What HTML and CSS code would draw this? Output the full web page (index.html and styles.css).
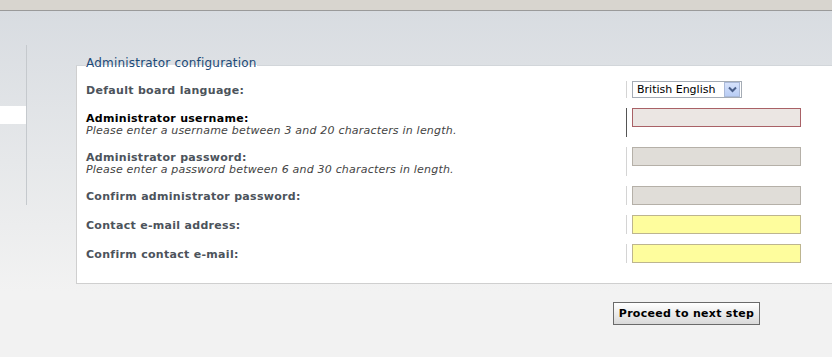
FILE: index.html
```html
<!DOCTYPE html>
<html lang="en">
<head>
    <meta charset="UTF-8">
    <title>Administrator configuration</title>
    <link rel="stylesheet" href="styles.css">
</head>
<body>
    <div class="topbar"></div>
    <div class="page">
        <div class="sidebar">
            <div class="menu-item"></div>
        </div>
        <div class="main">
            <fieldset class="config">
                <legend>Administrator configuration</legend>
                <dl>
                    <dt class="short">Default board language:</dt>
                    <dd class="short">
                        <span class="select">
                            <span class="select-text">British English</span>
                            <span class="select-arrow">
                                <svg width="9" height="7" viewBox="0 0 9 7"><path d="M1 1.5 L4.5 5 L8 1.5" fill="none" stroke="#4a5f8a" stroke-width="2"/></svg>
                            </span>
                        </span>
                    </dd>

                    <dt class="active"><label>Administrator username:</label>
                        <span class="explain">Please enter a username between 3 and 20 characters in length.</span></dt>
                    <dd class="active"><input type="text" class="inputbox error"></dd>

                    <dt><label>Administrator password:</label>
                        <span class="explain">Please enter a password between 6 and 30 characters in length.</span></dt>
                    <dd><input type="password" class="inputbox"></dd>

                    <dt><label>Confirm administrator password:</label></dt>
                    <dd><input type="password" class="inputbox"></dd>

                    <dt><label>Contact e-mail address:</label></dt>
                    <dd><input type="text" class="inputbox highlight"></dd>

                    <dt><label>Confirm contact e-mail:</label></dt>
                    <dd><input type="text" class="inputbox highlight"></dd>
                </dl>
            </fieldset>
            <div class="actions">
                <button class="button">Proceed to next step</button>
            </div>
        </div>
    </div>
</body>
</html>
```

FILE: styles.css
```css
body {
    margin: 0;
    font-family: 'DejaVu Sans', Verdana, sans-serif;
    overflow: hidden;
    background: #f2f2f2;
}
.topbar {
    height: 10px;
    background-color: #d8d5cf;
    border-bottom: 1px solid #9a9a9a;
}
.page {
    display: flex;
    min-height: 346px;
    background: linear-gradient(#d8dce1 0, #e6e8ea 150px, #f2f2f2 280px);
}
.sidebar {
    width: 26px;
    height: 99px;
    margin-top: 34px;
    padding-top: 61px;
    border-right: 1px solid #c5c9cd;
}
.menu-item {
    height: 18px;
    background: #fff;
}
.main {
    flex: 1;
    padding: 45px 0 0 49px;
}
.config {
    margin: 0 -20px 0 0;
    padding: 7px 9px 20px 9px;
    background: #fff;
    border: 1px solid #cfcfcf;
    border-top-color: #d2d6da;
}
.config legend {
    padding: 0 0 4px 0;
    font-size: 12px;
    line-height: 14px;
    letter-spacing: 0.2px;
    color: #1c4a78;
}
dl {
    display: grid;
    grid-template-columns: 540px 1fr;
    row-gap: 10px;
    margin: 0;
}
dt {
    padding-top: 4px;
    font-size: 11px;
    letter-spacing: 0.3px;
    color: #4c535b;
}
dt label {
    display: block;
    font-weight: bold;
    line-height: 13px;
}
dt.short {
    padding-top: 3px;
    font-weight: bold;
    line-height: 13px;
}
dt.active {
    color: #000;
}
.explain {
    display: block;
    font-size: 11px;
    line-height: 12px;
    letter-spacing: 0.2px;
    font-style: italic;
    color: #444;
}
dd {
    margin: 0;
    padding-left: 5px;
    border-left: 1px solid #d4d4d4;
}
dd.active {
    border-left-color: #555;
}
.select {
    display: flex;
    align-items: center;
    justify-content: space-between;
    width: 108px;
    height: 15px;
    border: 1px solid #a5acb5;
    font-size: 11px;
    color: #000;
}
.select-text {
    padding-left: 4px;
}
.select-arrow {
    display: flex;
    align-items: center;
    justify-content: center;
    width: 14px;
    height: 13px;
    margin-right: 1px;
    background: linear-gradient(#d6e2fb, #b9cdf5);
    border: 1px solid #aab9d8;
}
.inputbox {
    display: block;
    width: 169px;
    height: 19px;
    margin: 0;
    padding: 0;
    box-sizing: border-box;
    border: 1px solid #b5b0a8;
    background: #e0ddd8;
}
.inputbox.error {
    border-color: #a96166;
    background: #ebe6e3;
}
.inputbox.highlight {
    border-color: #bdb58f;
    background: #fefd9d;
}
.actions {
    padding: 18px 0 0 537px;
}
.button {
    width: 147px;
    height: 23px;
    padding: 0;
    border: 1px solid #6a6a6a;
    background: linear-gradient(#ffffff, #d9d9d9);
    font-family: 'DejaVu Sans', Verdana, sans-serif;
    font-size: 11px;
    font-weight: bold;
    letter-spacing: 0.3px;
    color: #000;
}
```
